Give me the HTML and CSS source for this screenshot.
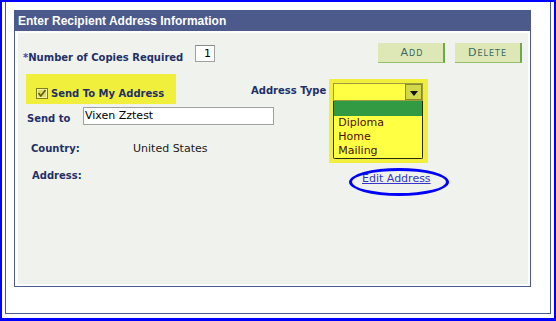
FILE: index.html
```html
<!DOCTYPE html>
<html>
<head>
<meta charset="utf-8">
<link rel="stylesheet" href="styles.css">
</head>
<body>
<div class="screen">
  <div class="frame">
    <div class="panel">
      <div class="panel-head">Enter Recipient Address Information</div>
      <div class="panel-body">
        <div class="row r1">
          <span class="lbl copies"><span class="req">*</span>Number of Copies Required</span>
          <span class="num-input">1</span>
          <span class="btns">
            <span class="btn btn-add">Add</span>
            <span class="btn btn-del">Delete</span>
          </span>
        </div>
        <div class="row r2">
          <div class="hl hl1">
            <svg class="chk" width="12" height="11" viewBox="0 0 12 11">
              <rect x="0.5" y="0.5" width="11" height="10" fill="#dcdc6a" stroke="#7d7d1c"/>
              <rect x="1.5" y="1.5" width="9" height="8" fill="none" stroke="#f4f4a8"/>
              <path d="M2.5 5 L4.8 8 L9.5 2" fill="none" stroke="#5c5c10" stroke-width="1.6"/>
            </svg>
            <span class="lbl">Send To My Address</span>
          </div>
          <span class="lbl addr-type">Address Type</span>
          <div class="hl hl2">
            <div class="select">
              <span class="sel-val"></span>
              <span class="sel-btn">
                <svg width="8" height="5" viewBox="0 0 8 5"><path d="M0 0 H8 L4 5 Z" fill="#111"/></svg>
              </span>
            </div>
            <div class="list">
              <div class="opt opt-sel"></div>
              <div class="opt">Diploma</div>
              <div class="opt">Home</div>
              <div class="opt">Mailing</div>
            </div>
          </div>
        </div>
        <div class="row r3">
          <span class="lbl sendto">Send to</span>
          <span class="txt-input">Vixen Zztest</span>
        </div>
        <div class="row r4">
          <span class="lbl country">Country:</span>
          <span class="val">United States</span>
        </div>
        <div class="row r5">
          <span class="lbl address">Address:</span>
          <span class="edit-wrap">
            <a class="edit-link" href="#">Edit Address</a>
            <span class="ring"></span>
          </span>
        </div>
      </div>
    </div>
  </div>
</div>
</body>
</html>
```

FILE: styles.css
```css
html, body {
  margin: 0;
  padding: 0;
  background: #ffffff;
}

.screen {
  width: 556px;
  height: 321px;
  box-sizing: border-box;
  border: 2px solid #0000ff;
  border-bottom-width: 3px;
  background: #ffffff;
  padding: 0 3px 4px 3px;
  display: flex;
  flex-direction: column;
}

.frame {
  flex: 1;
  border: 1px solid #4d5a8c;
  border-top: none;
  padding: 8px 0 0 8px;
}

.panel {
  width: 517px;
  height: 277px;
  box-sizing: border-box;
  border: 1px solid #4d5a8c;
  background: #ffffff;
  display: flex;
  flex-direction: column;
}

.panel-head {
  height: 20px;
  background: #4b5a8a;
  color: #ffffff;
  font-family: "Liberation Sans", Arial, sans-serif;
  font-weight: bold;
  font-size: 12px;
  line-height: 20px;
  margin: -1px -1px 0 -1px;
  padding-top: 1px;
  padding-left: 4px;
}

.panel-body {
  flex: 1;
  margin: 2px 2px 2px 3px;
  background: #f0f2ee;
  font-family: "DejaVu Sans", Verdana, sans-serif;
}

.row {
  display: flex;
}

.lbl {
  font-weight: bold;
  font-size: 10px;
  color: #1f3067;
  white-space: nowrap;
}

.req {
  color: #4f42a8;
}

/* row 1 */
.r1 {
  margin-top: 10px;
  height: 20px;
  align-items: center;
  padding-right: 6px;
}

.copies {
  margin-left: 5px;
  width: 172px;
  padding-top: 8px;
}

.num-input {
  width: 20px;
  height: 17px;
  box-sizing: border-box;
  border: 1px solid #a0a0a0;
  border-top-color: #8a8a8a;
  background: #ffffff;
  font-size: 11px;
  line-height: 15px;
  text-align: right;
  padding-right: 3px;
  color: #000;
}

.btns {
  margin-left: auto;
  display: flex;
  gap: 10px;
  height: 20px;
}

.btn {
  height: 20px;
  box-sizing: border-box;
  background: #dde8b6;
  border-right: 2px solid #6fa84c;
  border-bottom: 1px solid #92bf68;
  color: #3a6a64;
  font-size: 11px;
  font-variant: small-caps;
  letter-spacing: 1px;
  line-height: 19px;
  text-align: center;
}

.btn-add {
  width: 67px;
  padding-left: 3px;
}

.btn-del {
  width: 67px;
}

/* row 2 */
.r2 {
  margin-top: 11px;
  height: 30px;
  align-items: flex-start;
}

.hl {
  background: #f0f03c;
}

.hl1 {
  margin-left: 8px;
  width: 150px;
  height: 30px;
  box-sizing: border-box;
  padding: 8px 0 0 10px;
  display: flex;
  align-items: center;
  gap: 3px;
}

.chk {
  display: block;
  flex: none;
}

.addr-type {
  margin-left: 75px;
  margin-top: 11px;
}

.hl2 {
  margin-left: 3px;
  margin-top: 5px;
  padding: 4px 5px 4px 4px;
  display: flex;
  flex-direction: column;
}

.select {
  width: 90px;
  height: 18px;
  box-sizing: border-box;
  border: 1px solid #9c9c3c;
  background: #ffff44;
  display: flex;
  justify-content: flex-end;
}

.sel-btn {
  width: 17px;
  height: 16px;
  box-sizing: border-box;
  border: 1px solid #8a8a2a;
  background: #d2d84a;
  display: flex;
  align-items: center;
  justify-content: center;
}

.sel-btn svg {
  display: block;
  margin-top: 2px;
}

.list {
  width: 90px;
  box-sizing: border-box;
  border: 1px solid #2a2a10;
  border-top: none;
  border-radius: 0 0 2px 2px;
  background: #ffff44;
}

.opt {
  height: 14px;
  font-size: 11px;
  line-height: 14px;
  padding-left: 4px;
  color: #4a0f0f;
}

.opt-sel {
  height: 15px;
  background: #339a44;
}

/* row 3 */
.r3 {
  margin-top: 3px;
  align-items: center;
}

.sendto {
  margin-left: 9px;
  width: 56px;
  padding-top: 4px;
}

.txt-input {
  width: 191px;
  height: 18px;
  box-sizing: border-box;
  border: 1px solid #a0a0a0;
  background: #ffffff;
  font-size: 11px;
  line-height: 15px;
  padding-left: 1px;
  color: #000;
}

/* row 4 */
.r4 {
  margin-top: 16px;
  align-items: center;
  height: 14px;
}

.country {
  margin-left: 13px;
  width: 102px;
}

.val {
  font-size: 11px;
  color: #1a1a1a;
}

/* row 5 */
.r5 {
  margin-top: 14px;
  height: 14px;
  align-items: flex-start;
}

.address {
  margin-left: 14px;
  width: 101px;
  line-height: 14px;
}

.edit-wrap {
  position: relative;
  margin-left: 229px;
  margin-top: 1px;
  line-height: 14px;
}

.edit-link {
  font-size: 11px;
  color: #3535c8;
  text-decoration: underline;
}

.ring {
  position: absolute;
  left: -13px;
  top: -2px;
  width: 100px;
  height: 28px;
  box-sizing: border-box;
  border: 3px solid #0000ff;
  border-radius: 50%;
  pointer-events: none;
}
```
